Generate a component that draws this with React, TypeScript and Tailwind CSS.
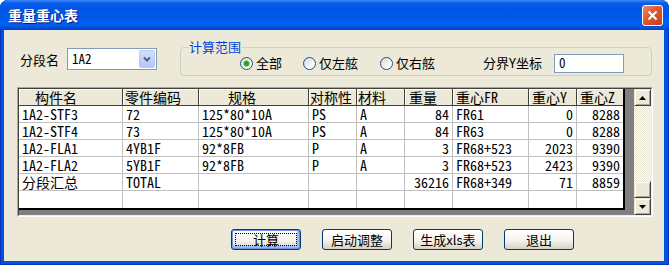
import React from 'react'

// Column definitions for the weight / centre-of-gravity grid
type Col = { title: string; head: string; right?: boolean }

const cols: Col[] = [
  { title: '构件名', head: 'pl-[16px]' },
  { title: '零件编码', head: 'pl-[2px]' },
  { title: '规格', head: 'pl-[29px]' },
  { title: '对称性', head: 'pl-[1px]' },
  { title: '材料', head: 'pl-[1px]' },
  { title: '重量', head: 'pl-[4px]', right: true },
  { title: '重心FR', head: 'pl-[3px]' },
  { title: '重心Y', head: 'pl-[3px]', right: true },
  { title: '重心Z', head: 'pl-[3px]', right: true },
]

const rows: string[][] = [
  ['1A2-STF3', '72', '125*80*10A', 'PS', 'A', '84', 'FR61', '0', '8288'],
  ['1A2-STF4', '73', '125*80*10A', 'PS', 'A', '84', 'FR63', '0', '8288'],
  ['1A2-FLA1', '4YB1F', '92*8FB', 'P', 'A', '3', 'FR68+523', '2023', '9390'],
  ['1A2-FLA2', '5YB1F', '92*8FB', 'P', 'A', '3', 'FR68+523', '2423', '9390'],
  ['分段汇总', 'TOTAL', '', '', '', '36216', 'FR68+349', '71', '8859'],
  ['', '', '', '', '', '', '', '', ''],
]

const ui = { fontFamily: '"Noto Sans CJK SC", "Liberation Sans", sans-serif' }
const grid = { fontFamily: '"Noto Sans Mono CJK SC", "Liberation Mono", "Noto Sans CJK SC", monospace' }

function Radio({ checked }: { checked?: boolean }) {
  return (
    <span className="flex h-[13px] w-[13px] shrink-0 items-center justify-center rounded-full border border-[#1C5180] bg-[linear-gradient(135deg,#D6D6CE,#FFFFFF_75%)]">
      {checked && <span className="h-[5px] w-[5px] rounded-full bg-[#21A121] shadow-[0_0_0_1px_#9BDB9B]" />}
    </span>
  )
}

function XpButton({ label, isDefault }: { label: string; isDefault?: boolean }) {
  return (
    <button
      className={
        'h-[21px] w-[70px] rounded-[3px] border border-[#003C74] bg-[linear-gradient(#FFFFFF,#F4F3EE_55%,#D8D2C6)] p-[3px] text-[13px] text-black ' +
        (isDefault ? 'shadow-[inset_0_0_0_1px_#6F93E6,inset_-1px_-1px_0_2px_#9DB9EB]' : '')
      }
      style={ui}
    >
      <span className={'flex h-full w-full items-center justify-center leading-[13px] ' + (isDefault ? 'border border-dotted border-black' : '')}>
        {label}
      </span>
    </button>
  )
}

function ScrollBtn({ down }: { down?: boolean }) {
  return (
    <div className="flex h-[17px] w-[17px] items-center justify-center border border-t-[#ECE9D8] border-l-[#ECE9D8] border-r-[#404040] border-b-[#404040] bg-[#ECE9D8] shadow-[inset_1px_1px_0_#FFFFFF,inset_-1px_-1px_0_#ACA899]">
      <svg width="7" height="4" viewBox="0 0 7 4">
        <path d={down ? 'M0 0 L7 0 L3.5 4 Z' : 'M0 4 L7 4 L3.5 0 Z'} fill="#000" />
      </svg>
    </div>
  )
}

export default function App() {
  return (
    <div className="flex h-[265px] w-[669px] flex-col rounded-t-[8px] bg-[#0054E3] shadow-[inset_0_0_0_1px_#0A2FB8]">
      {/* title bar */}
      <div className="flex h-[30px] shrink-0 items-center justify-between rounded-t-[8px] bg-[linear-gradient(#3D8BF7_0px,#0A5EEB_3px,#0055E5_8px,#0058EA_18px,#0061F1_24px,#0050DA_28px,#003FC8_30px)] pl-[8px] pr-[6px]">
        <span className="text-[14px] font-bold leading-[16px] text-white [text-shadow:1px_1px_0_#0A1883]" style={ui}>
          重量重心表
        </span>
        <div className="flex h-[21px] w-[21px] items-center justify-center rounded-[3px] border border-white bg-[linear-gradient(135deg,#EE8A6C,#E0572F_45%,#C93C14)]">
          <svg width="11" height="11" viewBox="0 0 11 11">
            <path d="M1.5 1.5 L9.5 9.5 M9.5 1.5 L1.5 9.5" stroke="#fff" strokeWidth="2" />
          </svg>
        </div>
      </div>

      {/* client area */}
      <div className="ml-[4px] h-[231px] w-[660px] bg-[#ECE9D8] text-black">
        <div className="flex items-start pt-[17px]" style={ui}>
          <span className="ml-[16px] mt-[5px] w-[47px] text-[13px] leading-[16px]">分段名</span>
          <div className="mt-[1px] flex h-[22px] w-[90px] items-center border border-[#7F9DB9] bg-white pr-px">
            <span className="flex-1 pl-[4px] text-[13px] leading-[16px]" style={grid}>1A2</span>
            <div className="flex h-[18px] w-[16px] items-center justify-center rounded-[2px] border border-[#B9C9EF] bg-[linear-gradient(#D2DEFB,#B4C8F6)]">
              <svg width="8" height="6" viewBox="0 0 8 6">
                <path d="M1 1.5 L4 4.5 L7 1.5" stroke="#4D6185" strokeWidth="2" fill="none" />
              </svg>
            </div>
          </div>

          {/* 计算范围 group */}
          <div className="relative ml-[23px] h-[29px] w-[472px] rounded-[4px] border border-[#D0D0BF]">
            <span className="absolute left-[7px] top-[-8px] bg-[#ECE9D8] px-px text-[13px] leading-[14px] text-[#0046D5]">计算范围</span>
            <div className="flex h-full items-center pt-[3px] text-[13px] leading-[16px]">
              <div className="ml-[59px] flex w-[63px] items-center gap-[3px]">
                <Radio checked />
                <span>全部</span>
              </div>
              <div className="flex w-[77px] items-center gap-[3px]">
                <Radio />
                <span>仅左舷</span>
              </div>
              <div className="flex w-[103px] items-center gap-[3px]">
                <Radio />
                <span>仅右舷</span>
              </div>
              <span className="w-[71px]">分界Y坐标</span>
              <div className="flex h-[19px] w-[70px] items-center border border-[#7F9DB9] bg-white pl-[4px]" style={grid}>
                0
              </div>
            </div>
          </div>
        </div>

        {/* grid frame */}
        <div className="ml-[13px] mt-[11px] h-[130px] w-[636px] border border-t-[#ACA899] border-l-[#ACA899] border-r-white border-b-white">
          <div className="flex h-full w-full border border-t-[#404040] border-l-[#404040] border-r-[#F1EFE2] border-b-[#F1EFE2] bg-[#808080]">
            <div className="h-[121px] w-[606px] border-b-2 border-r-2 border-black bg-white text-[14px]" style={grid}>
              <div className="grid grid-cols-[104px_76px_110px_48px_48px_48px_76px_48px_46px]">
                {cols.map((c, i) => (
                  <div
                    key={c.title}
                    className={
                      'h-[17px] whitespace-nowrap border-b border-[#404040] bg-[#ECE9D8] leading-[16px] shadow-[inset_1px_1px_0_#FFFFFF] ' +
                      c.head +
                      (i < 8 ? ' border-r' : '')
                    }
                  >
                    {c.title}
                  </div>
                ))}
                {rows.map((r, ri) =>
                  r.map((v, ci) => (
                    <div
                      key={ri + '-' + ci}
                      className={
                        'h-[17px] whitespace-nowrap border-[#C0C0C0] leading-[16px] ' +
                        (ri < 5 ? 'border-b ' : '') +
                        (ci < 8 ? 'border-r ' : '') +
                        (cols[ci].right ? 'pr-[3px] text-right' : 'pl-[3px]')
                      }
                    >
                      {v}
                    </div>
                  ))
                )}
              </div>
            </div>
            <div className="flex-1" />
            <div className="flex w-[17px] flex-col">
              <ScrollBtn />
              <div className="flex-1 bg-[repeating-conic-gradient(#FFFFFF_0_25%,#E6E3D3_0_50%)] bg-[length:2px_2px]" />
              <div className="h-[17px] w-[17px] border border-t-[#ECE9D8] border-l-[#ECE9D8] border-r-[#404040] border-b-[#404040] bg-[#ECE9D8] shadow-[inset_1px_1px_0_#FFFFFF,inset_-1px_-1px_0_#ACA899]" />
              <ScrollBtn down />
            </div>
          </div>
        </div>

        {/* buttons */}
        <div className="ml-[227px] mt-[12px] flex gap-[21px]">
          <XpButton label="计算" isDefault />
          <XpButton label="启动调整" />
          <XpButton label="生成xls表" />
          <XpButton label="退出" />
        </div>
      </div>
    </div>
  )
}
